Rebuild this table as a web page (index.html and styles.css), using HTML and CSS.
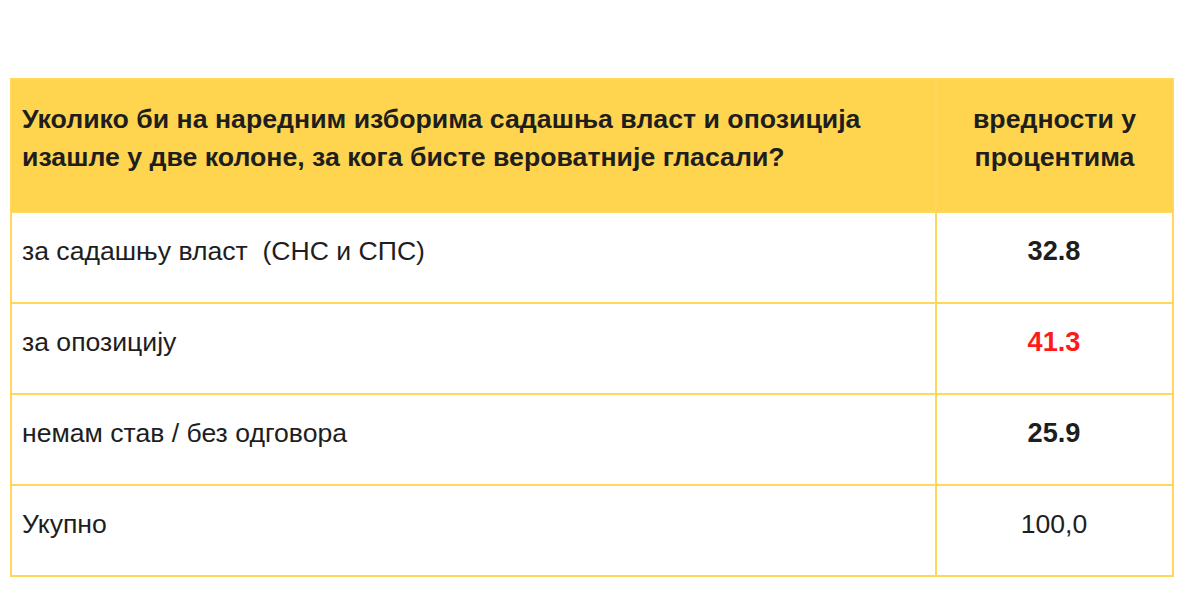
FILE: index.html
```html
<!DOCTYPE html>
<html lang="sr">
<head>
<meta charset="utf-8">
<title>Анкета</title>
<link rel="stylesheet" href="styles.css">
</head>
<body>
<table class="poll">
  <colgroup>
    <col class="col-q">
    <col class="col-v">
  </colgroup>
  <thead>
    <tr class="head-row">
      <th class="q">Уколико би на наредним изборима садашња власт и опозиција изашле у две колоне, за кога бисте вероватније гласали?</th>
      <th class="v">вредности у процентима</th>
    </tr>
  </thead>
  <tbody>
    <tr class="row">
      <td class="q">за садашњу власт &nbsp;(СНС и СПС)</td>
      <td class="v strong">32.8</td>
    </tr>
    <tr class="row">
      <td class="q">за опозицију</td>
      <td class="v strong red">41.3</td>
    </tr>
    <tr class="row">
      <td class="q">немам став / без одговора</td>
      <td class="v strong">25.9</td>
    </tr>
    <tr class="row">
      <td class="q">Укупно</td>
      <td class="v">100,0</td>
    </tr>
  </tbody>
</table>
</body>
</html>
```
FILE: styles.css
```css
html, body {
  margin: 0;
  padding: 0;
  background: #ffffff;
}
body {
  padding: 78px 0 0 10px;
  font-family: "Liberation Sans", Arial, sans-serif;
  color: #1e1e1e;
}
.poll {
  border-collapse: collapse;
  width: 1164px;
  table-layout: fixed;
  font-size: 26.6px;
}
.col-q {
  width: 925px;
}
.poll th, .poll td {
  border: 2px solid #ffd75a;
  vertical-align: middle;
  padding: 0 11px 13px 10px;
}
.poll .q {
  text-align: left;
}
.poll .v {
  text-align: center;
}
.head-row th {
  background: #ffd550;
  font-weight: bold;
  font-size: 26.7px;
  height: 115px;
  line-height: 38px;
  padding-top: 0;
  padding-bottom: 16px;
}
.head-row th.v {
  padding-left: 8px;
  padding-right: 8px;
}
.row td {
  height: 76px;
  line-height: 30px;
}
.strong {
  font-weight: bold;
  font-size: 27.2px;
}
.red {
  color: #ff1a1a;
}
```
